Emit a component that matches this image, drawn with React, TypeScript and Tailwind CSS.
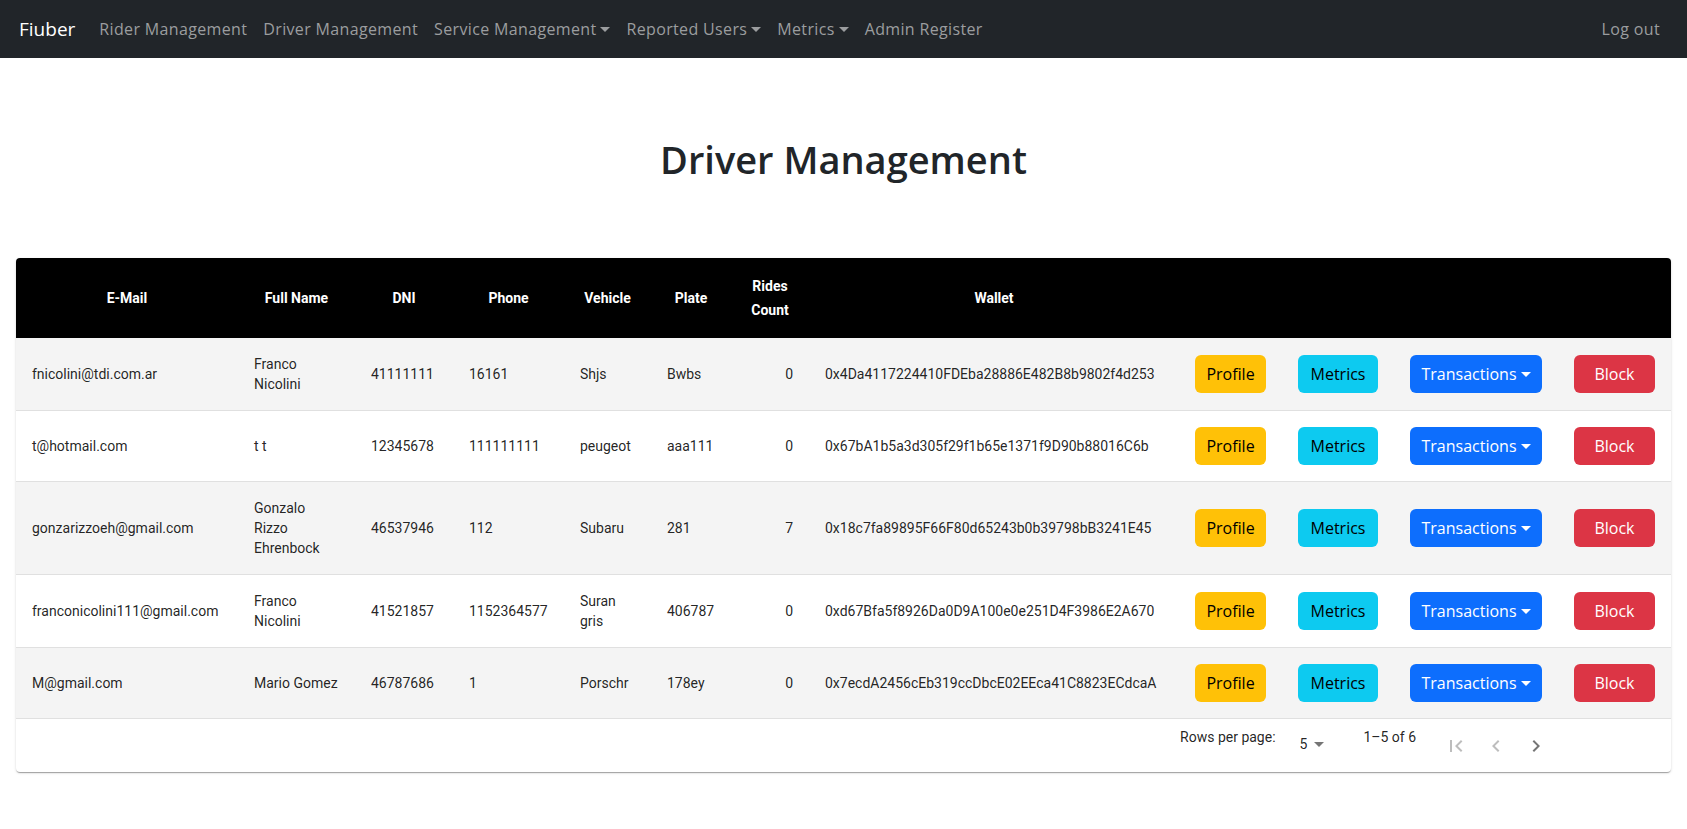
import React from "react";

type Row = {
  email: string;
  name: string;
  dni: string;
  phone: string;
  vehicle: string;
  plate: string;
  rides: string;
  wallet: string;
};

const rows: Row[] = [
  { email: "fnicolini@tdi.com.ar", name: "Franco Nicolini", dni: "41111111", phone: "16161", vehicle: "Shjs", plate: "Bwbs", rides: "0", wallet: "0x4Da4117224410FDEba28886E482B8b9802f4d253" },
  { email: "t@hotmail.com", name: "t t", dni: "12345678", phone: "111111111", vehicle: "peugeot", plate: "aaa111", rides: "0", wallet: "0x67bA1b5a3d305f29f1b65e1371f9D90b88016C6b" },
  { email: "gonzarizzoeh@gmail.com", name: "Gonzalo Rizzo Ehrenbock", dni: "46537946", phone: "112", vehicle: "Subaru", plate: "281", rides: "7", wallet: "0x18c7fa89895F66F80d65243b0b39798bB3241E45" },
  { email: "franconicolini111@gmail.com", name: "Franco Nicolini", dni: "41521857", phone: "1152364577", vehicle: "Suran gris", plate: "406787", rides: "0", wallet: "0xd67Bfa5f8926Da0D9A100e0e251D4F3986E2A670" },
  { email: "M@gmail.com", name: "Mario Gomez", dni: "46787686", phone: "1", vehicle: "Porschr", plate: "178ey", rides: "0", wallet: "0x7ecdA2456cEb319ccDbcE02EEca41C8823ECdcaA" },
];

function Caret() {
  return (
    <span className="inline-block ml-[4px] align-[3px] w-0 h-0 border-t-[5px] border-t-current border-x-[5px] border-x-transparent" />
  );
}

function NavLink({ children, dropdown }: { children: React.ReactNode; dropdown?: boolean }) {
  return (
    <span className="px-[8px] text-[#9b9d9f] text-[16px] tracking-[0.35px] leading-[24px] whitespace-nowrap">
      {children}
      {dropdown && <Caret />}
    </span>
  );
}

const td = "px-[16px] py-[16px] text-[14px] leading-[20px] text-[rgba(0,0,0,0.87)] border-b border-[#e0e0e0] align-middle";
const btn = "block rounded-[6px] text-[16px] leading-[24px] py-[7px] text-center font-['Open_Sans',sans-serif] whitespace-nowrap";

export default function App() {
  return (
    <div className="min-h-screen bg-white font-['Roboto',sans-serif]">
      <nav className="h-[58px] bg-[#212529] flex items-center pl-[19px] pr-[27px] font-['Open_Sans',sans-serif]">
        <span className="text-white text-[19px] leading-[30px] mr-[16px]">Fiuber</span>
        <NavLink>Rider Management</NavLink>
        <NavLink>Driver Management</NavLink>
        <NavLink dropdown>Service Management</NavLink>
        <NavLink dropdown>Reported Users</NavLink>
        <NavLink dropdown>Metrics</NavLink>
        <NavLink>Admin Register</NavLink>
        <span className="ml-auto text-[#9b9d9f] text-[16px] tracking-[0.35px] leading-[24px]">Log out</span>
      </nav>

      <h1 className="mt-[78px] mb-[76px] text-center text-[38px] leading-[46px] font-semibold text-[#212529] font-['Open_Sans',sans-serif]">
        Driver Management
      </h1>

      <div className="px-[16px]">
        <div className="rounded-[4px] bg-white shadow-[0px_2px_1px_-1px_rgba(0,0,0,0.2),0px_1px_1px_0px_rgba(0,0,0,0.14),0px_1px_3px_0px_rgba(0,0,0,0.12)]">
          <table className="w-[1655px] table-fixed border-collapse">
            <colgroup>
              <col className="w-[222px]" />
              <col className="w-[117px]" />
              <col className="w-[98px]" />
              <col className="w-[111px]" />
              <col className="w-[87px]" />
              <col className="w-[80px]" />
              <col className="w-[78px]" />
              <col className="w-[370px]" />
              <col className="w-[103px]" />
              <col className="w-[112px]" />
              <col className="w-[164px]" />
              <col className="w-[113px]" />
            </colgroup>
            <thead>
              <tr className="bg-black text-white">
                {["E-Mail", "Full Name", "DNI", "Phone", "Vehicle", "Plate", "Rides Count", "Wallet", "", "", "", ""].map((h, i) => (
                  <th
                    key={i}
                    className={
                      "px-[16px] py-[16px] text-[14px] leading-[24px] font-bold text-center align-middle " +
                      (i === 0 ? "rounded-tl-[4px]" : i === 11 ? "rounded-tr-[4px]" : "")
                    }
                  >
                    {h}
                  </th>
                ))}
              </tr>
            </thead>
            <tbody>
              {rows.map((r, i) => (
                <tr key={i} className={i % 2 === 0 ? "bg-[#f4f4f4]" : "bg-white"}>
                  <td className={td}>{r.email}</td>
                  <td className={td}>{r.name}</td>
                  <td className={td}>{r.dni}</td>
                  <td className={td}>{r.phone}</td>
                  <td className={td}>{r.vehicle}</td>
                  <td className={td}>{r.plate}</td>
                  <td className={td + " text-right"}>{r.rides}</td>
                  <td className={td + " whitespace-nowrap"}>{r.wallet}</td>
                  <td className={td}>
                    <button className={btn + " w-[71px] bg-[#ffc107] text-black"}>Profile</button>
                  </td>
                  <td className={td}>
                    <button className={btn + " w-[80px] bg-[#0dcaf0] text-black"}>Metrics</button>
                  </td>
                  <td className={td}>
                    <button className={btn + " w-[132px] bg-[#0d6efd] text-white"}>
                      Transactions
                      <Caret />
                    </button>
                  </td>
                  <td className={td}>
                    <button className={btn + " w-[81px] bg-[#dc3545] text-white"}>Block</button>
                  </td>
                </tr>
              ))}
            </tbody>
          </table>

          <div className="h-[53px] flex items-start justify-end pr-[115px] text-[14px] leading-[20px] text-[rgba(0,0,0,0.87)]">
            <span className="mt-[8px]">Rows per page:</span>
            <div className="ml-[24px] mt-[15px] flex items-center h-[20px]">
              <span>5</span>
              <svg width="24" height="24" viewBox="0 0 24 24" className="fill-[rgba(0,0,0,0.54)]">
                <path d="M7 10l5 5 5-5z" />
              </svg>
            </div>
            <span className="ml-[32px] mt-[8px]">1–5 of 6</span>
            <div className="ml-[20px] mt-[7px] flex">
              <span className="w-[40px] h-[40px] flex items-center justify-center">
                <svg width="24" height="24" viewBox="0 0 24 24" className="fill-[rgba(0,0,0,0.26)]">
                  <path d="M18.41 16.59L13.82 12l4.59-4.59L17 6l-6 6 6 6zM6 6h2v12H6z" />
                </svg>
              </span>
              <span className="w-[40px] h-[40px] flex items-center justify-center">
                <svg width="24" height="24" viewBox="0 0 24 24" className="fill-[rgba(0,0,0,0.26)]">
                  <path d="M15.41 16.59L10.83 12l4.58-4.59L14 6l-6 6 6 6 1.41-1.41z" />
                </svg>
              </span>
              <span className="w-[40px] h-[40px] flex items-center justify-center">
                <svg width="24" height="24" viewBox="0 0 24 24" className="fill-[rgba(0,0,0,0.54)]">
                  <path d="M8.59 16.59L13.17 12 8.59 7.41 10 6l6 6-6 6-1.41-1.41z" />
                </svg>
              </span>
            </div>
          </div>
        </div>
      </div>
    </div>
  );
}
